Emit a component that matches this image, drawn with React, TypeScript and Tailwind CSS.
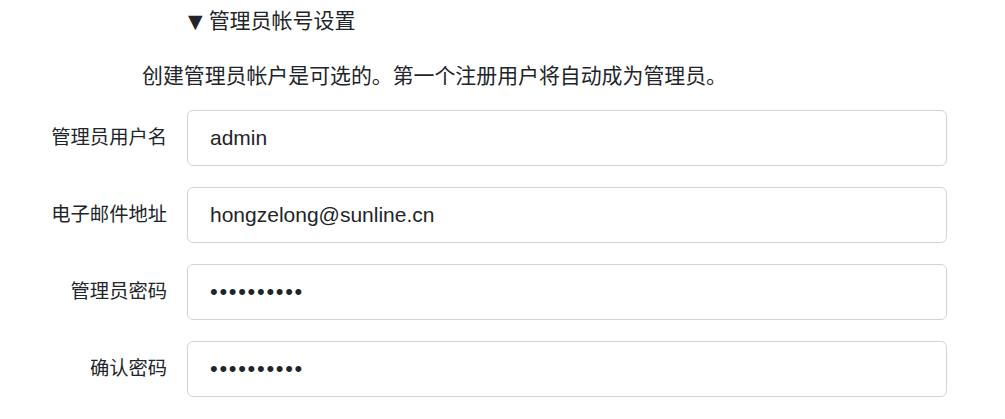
import React from 'react';

const fields = [
  { label: '管理员用户名', type: 'text', value: 'admin' },
  { label: '电子邮件地址', type: 'text', value: 'hongzelong@sunline.cn' },
  { label: '管理员密码', type: 'password', value: '1234567890' },
  { label: '确认密码', type: 'password', value: '1234567890' },
];

const App: React.FC = () => (
  <div className="w-[1005px] h-[419px] bg-white text-[#212529] font-['Liberation_Sans','Noto_Sans_CJK_SC',sans-serif] overflow-hidden">
    <div className="pl-[188px] pt-[7px] text-[21px] leading-[28px] flex items-center">
      <span className="text-[19px] mr-[6px] font-['DejaVu_Sans']">▼</span>
      <span>管理员帐号设置</span>
    </div>
    <p className="pl-[142px] mt-[27px] text-[20.9px] leading-[28px]">创建管理员帐户是可选的。第一个注册用户将自动成为管理员。</p>
    <div className="mt-[20px] w-[947px] grid grid-cols-[167px_1fr] gap-x-5 gap-y-[21px]">
      {fields.map((f) => (
        <React.Fragment key={f.label}>
          <label className="flex items-center justify-end text-[19.3px]">{f.label}</label>
          <input
            type={f.type}
            defaultValue={f.value}
            className={
              f.type === 'password'
                ? 'h-[56px] px-[22px] text-[22px] tracking-[1.7px] border border-[#ced4da] rounded-[6px] outline-none'
                : 'h-[56px] px-[22px] text-[21px] border border-[#ced4da] rounded-[6px] outline-none'
            }
          />
        </React.Fragment>
      ))}
    </div>
  </div>
);

export default App;
